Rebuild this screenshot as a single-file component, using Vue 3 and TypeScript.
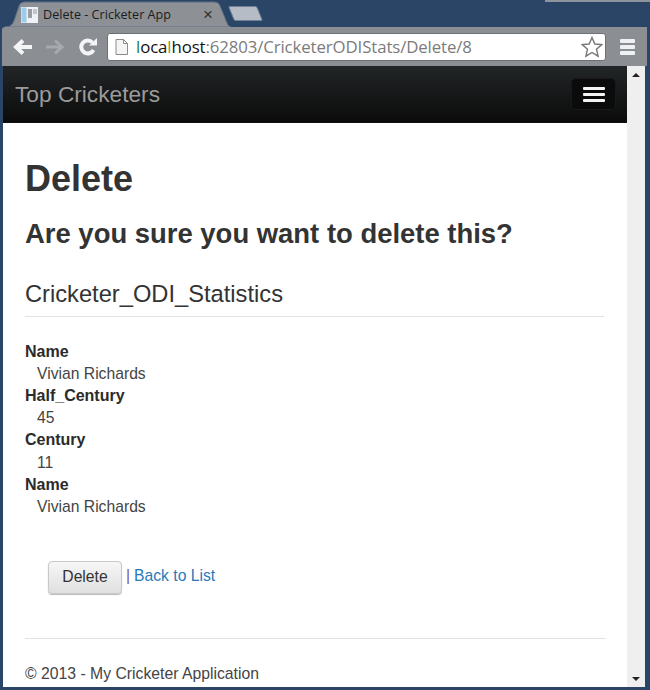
<script setup lang="ts">
interface Row { label: string; value: string }
const rows: Row[] = [
  { label: 'Name', value: 'Vivian Richards' },
  { label: 'Half_Century', value: '45' },
  { label: 'Century', value: '11' },
  { label: 'Name', value: 'Vivian Richards' },
]
</script>

<template>
  <div class="window">
    <div class="tabstrip">
      <div class="tab">
        <svg class="tab-shape" width="226" height="27" viewBox="0 0 226 27">
          <path d="M0 27 C6 27 8 24 10 18 L14 6 C15 3 17 2 21 2 L208 2 C212 2 214 3 215 6 L220 18 C222 24 224 27 226 27 Z" fill="#8d9095" stroke="#5f6f84" stroke-width="1" />
        </svg>
        <svg class="favicon" width="17" height="16" viewBox="0 0 17 16">
          <rect x="0" y="0" width="17" height="16" fill="#eef2f6" />
          <rect x="0.5" y="0.5" width="5" height="15" fill="#9ccbec" />
          <rect x="7" y="2" width="4" height="9" fill="#9a9ea3" />
          <rect x="12" y="2" width="4" height="5" fill="#c4c7ca" />
        </svg>
        <span class="tab-title">Delete - Cricketer App</span>
        <span class="tab-close">×</span>
      </div>
      <div class="newtab"></div>
      <div class="win-btns"></div>
    </div>
    <div class="toolbar">
      <svg class="tool" width="24" height="20" viewBox="0 0 24 20">
        <path d="M21 10 H6 M12 3.5 L5 10 L12 16.5" fill="none" stroke="#f4f5f6" stroke-width="4" />
      </svg>
      <svg class="tool fwd" width="24" height="20" viewBox="0 0 24 20">
        <path d="M3 10 H18 M12 3.5 L19 10 L12 16.5" fill="none" stroke="#a6a9ad" stroke-width="3" />
      </svg>
      <svg class="tool reload" width="20" height="20" viewBox="0 0 20 20">
        <path d="M15.5 13 A6.5 6.5 0 1 1 14.5 5.5" fill="none" stroke="#f4f5f6" stroke-width="4" />
        <path d="M11 8.5 L19 8.5 L19 1 Z" fill="#f4f5f6" />
      </svg>
      <div class="omnibox">
        <svg class="page-icon" width="13" height="16" viewBox="0 0 13 16">
          <path d="M1 .5 H8.5 L12.5 4.5 V15.5 H1 Z M8.5 .5 V4.5 H12.5" fill="#f5f5f5" stroke="#8a8a8a" />
        </svg>
        <span class="url"><span class="g">l</span><span class="host">oca</span><span class="g2">l</span><span class="host">host</span>:62803/CricketerODIStats/Delete/8</span>
        <svg class="star" width="22" height="22" viewBox="0 0 22 22">
          <path d="M11 1.5 L13.8 8 L20.8 8.6 L15.5 13.2 L17.1 20.2 L11 16.5 L4.9 20.2 L6.5 13.2 L1.2 8.6 L8.2 8 Z" fill="#fff" stroke="#777" stroke-width="1.4" />
        </svg>
      </div>
      <div class="menu"><i></i><i></i><i></i></div>
    </div>
    <div class="viewport">
      <div class="page">
        <nav class="navbar">
          <span class="brand">Top Cricketers</span>
          <button class="toggle" type="button"><i></i><i></i><i></i></button>
        </nav>
        <main class="content">
          <h1>Delete</h1>
          <h2>Are you sure you want to delete this?</h2>
          <h3>Cricketer_ODI_Statistics</h3>
          <hr class="rule" />
          <dl>
            <template v-for="(r, i) in rows" :key="i">
              <dt>{{ r.label }}</dt>
              <dd>{{ r.value }}</dd>
            </template>
          </dl>
          <div class="actions">
            <button class="btn" type="button">Delete</button>
            <span class="sep">|</span>
            <a class="link" href="#">Back to List</a>
          </div>
          <hr class="rule foot" />
          <footer>© 2013 - My Cricketer Application</footer>
        </main>
      </div>
      <div class="scrollbar">
        <span class="arrow up"></span>
        <span class="arrow down"></span>
      </div>
    </div>
  </div>
</template>

<style>
html, body { margin: 0; padding: 0; background: #2b4566; }
</style>

<style scoped>
.window {
  width: 650px;
  height: 690px;
  display: flex;
  flex-direction: column;
  overflow: hidden;
  background: #2b4566;
  font-family: "Liberation Sans", Arial, sans-serif;
  color: #333;
}
.tabstrip {
  height: 27px;
  flex: none;
  display: flex;
  align-items: flex-end;
  padding-left: 5px;
  position: relative;
}
.tab {
  width: 226px;
  height: 27px;
  position: relative;
  display: flex;
  align-items: center;
  padding: 2px 0 0 16px;
  box-sizing: border-box;
}
.tab-shape { position: absolute; left: 0; top: 0; }
.favicon { position: relative; margin-right: 5px; }
.tab-title {
  position: relative;
  font-family: "Open Sans", sans-serif;
  font-size: 12.6px;
  color: #1c1c1c;
  width: 160px;
  white-space: nowrap;
}
.tab-close {
  position: relative;
  font-size: 17px;
  color: #333;
  line-height: 1;
}
.newtab {
  width: 29px;
  height: 15px;
  margin: 0 0 6px 0;
  background: #b5bcc6;
  transform: skewX(22deg);
  border-radius: 2px;
  border: 1px solid #6f8098;
  box-sizing: border-box;
}
.win-btns {
  position: absolute;
  right: 0;
  top: 0;
  width: 105px;
  height: 2px;
  background: #8d949e;
}
.toolbar {
  height: 39px;
  flex: none;
  margin: 0 0 0 2px;
  background: #8b8e93;
  border-radius: 3px 3px 0 0;
  display: flex;
  align-items: center;
  box-sizing: border-box;
  padding: 0 5px 0 9px;
  border-right: 3px solid #2b4566;
}
.tool { flex: none; }
.fwd { margin-left: 8px; }
.reload { margin-left: 11px; }
.omnibox {
  flex: none;
  width: 499px;
  height: 28px;
  margin-left: 9px;
  background: #fff;
  border: 1px solid #6d7075;
  border-radius: 3px;
  box-sizing: border-box;
  display: flex;
  align-items: center;
  padding: 0 2px 0 7px;
}
.page-icon { flex: none; margin-right: 8px; }
.url {
  flex: 1;
  font-family: "Open Sans", sans-serif;
  font-size: 16.8px;
  color: #7b7b7b;
  white-space: nowrap;
  letter-spacing: -0.1px;
}
.host { color: #111; }
.g { color: #2a7a4a; }
.g2 { color: #a08a20; }
.star { flex: none; }
.menu {
  flex: none;
  margin-left: 14px;
  display: flex;
  flex-direction: column;
  gap: 2px;
}
.menu i {
  display: block;
  width: 15px;
  height: 4px;
  background: #f0f1f2;
  border-radius: 1px;
}
.viewport {
  flex: 1;
  min-height: 0;
  margin: 0 5px 3px 3px;
  display: flex;
  background: #fff;
}
.page { flex: 1; min-width: 0; }
.navbar {
  height: 57px;
  box-sizing: border-box;
  background: linear-gradient(#222526, #0b0b0b);
  display: flex;
  align-items: center;
  justify-content: space-between;
  padding: 0 11px 0 12px;
  border-bottom: 1px solid #111;
}
.brand {
  font-size: 22.7px;
  color: #9b9b9b;
}
.toggle {
  width: 45px;
  height: 32px;
  background: #0b0b0b;
  border: 1px solid #181818;
  border-radius: 5px;
  padding: 0;
  display: flex;
  flex-direction: column;
  align-items: center;
  justify-content: center;
  gap: 3px;
}
.toggle i {
  display: block;
  width: 22px;
  height: 3px;
  background: #f4f4f4;
  border-radius: 1px;
}
.content { padding: 0 21px 0 22px; }
h1 {
  margin: 0;
  padding-top: 36px;
  font-size: 36px;
  line-height: 40px;
  font-weight: 700;
}
h2 {
  margin: 19px 0 0;
  font-size: 27.45px;
  line-height: 32px;
  font-weight: 700;
}
h3 {
  margin: 30px 0 0;
  font-size: 23.7px;
  line-height: 28px;
  font-weight: 400;
}
.rule {
  border: 0;
  border-top: 1px solid #e2e2e2;
  margin: 8px 2px 0 0;
}
dl { margin: 23.5px 0 0; font-size: 16px; line-height: 22.2px; }
dt { font-weight: 700; color: #2b2b2b; }
dd { margin: 0 0 0 12px; color: #444; font-size: 15.7px; }
.actions {
  margin: 42.5px 0 0 23px;
  display: flex;
  align-items: center;
  font-size: 15.7px;
}
.btn {
  width: 74px;
  height: 33px;
  padding: 0;
  font-family: inherit;
  font-size: 15.7px;
  color: #333;
  background: linear-gradient(#f6f6f6, #e0e0e0);
  border: 1px solid #c8c8c8;
  border-radius: 4px;
  box-shadow: 0 1px 1px #bbb;
}
.sep { margin-left: 4px; color: #7a5a8a; position: relative; top: -1px; }
.link { margin-left: 4px; color: #2a7ab8; text-decoration: none; position: relative; top: -1px; }
.foot { margin: 44px 0 0; }
footer {
  margin-top: 24px;
  font-size: 15.75px;
  line-height: 22px;
  color: #444;
}
.scrollbar {
  flex: none;
  width: 18px;
  background: #efefef;
  display: flex;
  flex-direction: column;
  justify-content: space-between;
  align-items: center;
  padding: 7px 0 6px;
  box-sizing: border-box;
}
.arrow { width: 0; height: 0; border-left: 4px solid transparent; border-right: 4px solid transparent; }
.up { border-bottom: 4px solid #222; }
.down { border-top: 4px solid #222; }
</style>
